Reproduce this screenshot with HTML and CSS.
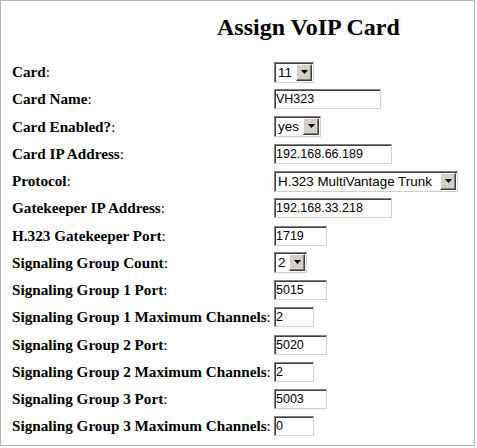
FILE: index.html
```html
<!DOCTYPE html>
<html>
<head>
<meta charset="utf-8">
<title>Assign VoIP Card</title>
<link rel="stylesheet" href="styles.css">
</head>
<body>
<div class="frame">
  <div class="title">Assign VoIP Card</div>
  <div class="form">
    <div class="label"><b>Card</b>:</div>
    <div class="ctl"><span class="sel w40"><span class="val">11</span><span class="btn"><svg width="7" height="4" viewBox="0 0 7 4"><polygon points="0,0 7,0 3.5,4" fill="#000"/></svg></span></span></div>

    <div class="label"><b>Card Name</b>:</div>
    <div class="ctl"><input class="field w107" type="text" value="VH323"></div>

    <div class="label"><b>Card Enabled?</b>:</div>
    <div class="ctl"><span class="sel w47"><span class="val">yes</span><span class="btn"><svg width="7" height="4" viewBox="0 0 7 4"><polygon points="0,0 7,0 3.5,4" fill="#000"/></svg></span></span></div>

    <div class="label"><b>Card IP Address</b>:</div>
    <div class="ctl"><input class="field w118" type="text" value="192.168.66.189"></div>

    <div class="label"><b>Protocol</b>:</div>
    <div class="ctl"><span class="sel w184"><span class="val">H.323 MultiVantage Trunk</span><span class="btn"><svg width="7" height="4" viewBox="0 0 7 4"><polygon points="0,0 7,0 3.5,4" fill="#000"/></svg></span></span></div>

    <div class="label"><b>Gatekeeper IP Address</b>:</div>
    <div class="ctl"><input class="field w118" type="text" value="192.168.33.218"></div>

    <div class="label"><b>H.323 Gatekeeper Port</b>:</div>
    <div class="ctl"><input class="field w53" type="text" value="1719"></div>

    <div class="label"><b>Signaling Group Count</b>:</div>
    <div class="ctl"><span class="sel w33"><span class="val">2</span><span class="btn"><svg width="7" height="4" viewBox="0 0 7 4"><polygon points="0,0 7,0 3.5,4" fill="#000"/></svg></span></span></div>

    <div class="label"><b>Signaling Group 1 Port</b>:</div>
    <div class="ctl"><input class="field w53" type="text" value="5015"></div>

    <div class="label"><b>Signaling Group 1 Maximum Channels</b>:</div>
    <div class="ctl"><input class="field w40" type="text" value="2"></div>

    <div class="label"><b>Signaling Group 2 Port</b>:</div>
    <div class="ctl"><input class="field w53" type="text" value="5020"></div>

    <div class="label"><b>Signaling Group 2 Maximum Channels</b>:</div>
    <div class="ctl"><input class="field w40" type="text" value="2"></div>

    <div class="label"><b>Signaling Group 3 Port</b>:</div>
    <div class="ctl"><input class="field w53" type="text" value="5003"></div>

    <div class="label"><b>Signaling Group 3 Maximum Channels</b>:</div>
    <div class="ctl"><input class="field w40" type="text" value="0"></div>
  </div>
</div>
</body>
</html>
```
FILE: styles.css
```css
html, body {
  margin: 0;
  padding: 0;
  background: #fff;
}
.frame {
  box-sizing: border-box;
  width: 475px;
  height: 446px;
  border: 1px solid #b4b4b4;
  padding: 11.6px 0 0 11px;
  font-family: "Liberation Serif", "Times New Roman", serif;
  color: #000;
}
.title {
  font-size: 24px;
  font-weight: bold;
  line-height: 28px;
  padding-left: 205px;
}
.form {
  margin-top: 17.8px;
  display: grid;
  grid-template-columns: 262px auto;
  grid-auto-rows: 27.27px;
  align-items: center;
}
.label {
  font-size: 15.2px;
  white-space: nowrap;
}
.ctl {
  display: flex;
  align-items: center;
}
.field {
  box-sizing: border-box;
  height: 20px;
  margin: 0;
  padding: 0 0 0 1px;
  border: 1px solid;
  border-color: #808080 #d4d0c8 #d4d0c8 #808080;
  box-shadow: inset 1px 1px 0 #404040;
  background: #fff;
  font-family: "Liberation Sans", Arial, sans-serif;
  font-size: 12.5px;
  color: #000;
  outline: none;
}
.sel {
  box-sizing: border-box;
  height: 21px;
  display: inline-flex;
  align-items: stretch;
  border: 1px solid;
  border-color: #808080 #d4d0c8 #d4d0c8 #808080;
  box-shadow: inset 1px 1px 0 #404040;
  background: #fff;
  padding: 1px;
  font-family: "Liberation Sans", Arial, sans-serif;
  font-size: 13.4px;
}
.sel .val {
  flex: 1;
  padding-left: 2px;
  display: flex;
  align-items: center;
  white-space: nowrap;
}
.sel .btn {
  box-sizing: border-box;
  width: 16px;
  background: #d4d0c8;
  border: 1px solid;
  border-color: #ffffff #404040 #404040 #ffffff;
  box-shadow: inset -1px -1px 0 #808080;
  display: flex;
  align-items: center;
  justify-content: center;
  padding-bottom: 1px;
}
.w33 { width: 33px; }
.w40 { width: 40px; }
.w47 { width: 47px; }
.w53 { width: 53px; }
.w107 { width: 107px; }
.w118 { width: 118px; }
.w184 { width: 184px; }
```
